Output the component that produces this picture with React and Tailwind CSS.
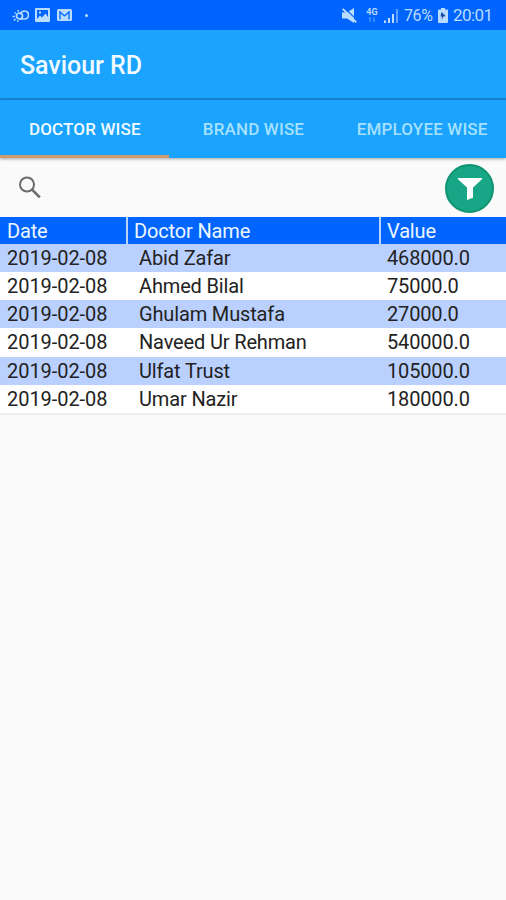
import React, { useState } from 'react';

const TABS = ['DOCTOR WISE', 'BRAND WISE', 'EMPLOYEE WISE'];

const ROWS = [
    { date: '2019-02-08', name: 'Abid Zafar', value: '468000.0' },
    { date: '2019-02-08', name: 'Ahmed Bilal', value: '75000.0' },
    { date: '2019-02-08', name: 'Ghulam Mustafa', value: '27000.0' },
    { date: '2019-02-08', name: 'Naveed Ur Rehman', value: '540000.0' },
    { date: '2019-02-08', name: 'Ulfat Trust', value: '105000.0' },
    { date: '2019-02-08', name: 'Umar Nazir', value: '180000.0' },
];

const StatusBar = () => (
    <div className="flex h-[30px] items-center justify-between bg-[#0065fe] pl-3 pr-[13px] text-[#b9dcff]">
        <div className="flex items-center">
            {/* Weather */}
            <svg width="17" height="14" viewBox="0 0 17 14" fill="none" stroke="currentColor" strokeWidth="1.700">
                <path d="M8 11h4.500a3.600 3.600 0 0 0 0-8c-2 0-3.500 1.500-4 3.500" />
                <circle cx="7.500" cy="8" r="3" />
                <path d="M.5 8.500h2.300M2.500 4.500l1.700 1M6 2l.5 1.700M1.800 12.500l1.800-1.400M5.500 13.700l.6-1.500" strokeWidth="1.400" />
            </svg>
            {/* Gallery */}
            <svg className="ml-1.5" width="15" height="14" viewBox="0 0 15 14">
                <path fill="currentColor" fillRule="evenodd" d="M1 0h13a1 1 0 0 1 1 1v12a1 1 0 0 1-1 1H1a1 1 0 0 1-1-1V1a1 1 0 0 1 1-1zM2 2v9l3-3.500 2 2 3.500-4L13 9V2zM4 3.500h2v2H4z" />
            </svg>
            {/* Mail */}
            <svg className="ml-[7px]" width="15" height="12" viewBox="0 0 15 12">
                <rect width="15" height="12" rx="1.500" fill="currentColor" />
                <path d="M3 10.500V3l4.500 4L12 3v7.500" fill="none" stroke="#0065fe" strokeWidth="1.300" />
            </svg>
            <span className="ml-[13px] h-[3px] w-[3px] rounded-full bg-current"></span>
        </div>
        <div className="flex items-center font-normal">
            {/* Muted */}
            <svg width="15" height="15" viewBox="0 0 15 15" fill="currentColor">
                <path d="M0 4.500h5L12 0v15L5 10.500H0z" />
                <path d="M2.500 0l13 12.500" stroke="#0065fe" strokeWidth="1.200" />
                <path d="M.7 .8l13.600 13.500" stroke="currentColor" strokeWidth="1.900" />
            </svg>
            <div className="ml-[9px] flex w-3 flex-col items-center">
                <span className="text-[9px] font-bold leading-[9px]">4G</span>
                <svg width="8" height="5" viewBox="0 0 8 5" fill="currentColor" opacity=".45">
                    <path d="M2 0l1.500 2h-1v3h-1V2h-1zM6 5L4.500 3h1V0h1v3h1z" />
                </svg>
            </div>
            <svg className="ml-1.5 mt-px" width="15" height="14" viewBox="0 0 15 14" fill="currentColor">
                <path d="M0 11.500h2V14H0zM4 9h2v5H4zM8 5h2v9H8z" />
                <path d="M12 0h2v14h-2z" opacity=".5" />
            </svg>
            <span className="ml-[5px] w-[30px] whitespace-nowrap pt-0.5 text-base tracking-[-0.4px]">76%</span>
            <svg className="ml-1" width="10" height="15" viewBox="0 0 10 15">
                <path fill="currentColor" d="M3 0h4v1.500h2a1 1 0 0 1 1 1V14a1 1 0 0 1-1 1H1a1 1 0 0 1-1-1V2.500a1 1 0 0 1 1-1h2z" />
                <path fill="#174f9e" d="M3.500 4l4.200 4-2.200.5L3.500 12l.5-3.500H2.500z" />
            </svg>
            <span className="ml-[5px] w-10 whitespace-nowrap pt-0.5 text-[17px] tracking-[-0.6px]">20:01</span>
        </div>
    </div>
);

const App = () => {
    const [active, setActive] = useState(0);

    return (
        <div className="h-[900px] w-[506px] overflow-hidden bg-[#fafafa] font-['Roboto',sans-serif]">
            <StatusBar />

            <header className="flex h-[70px] items-center border-b-2 border-[#1784da] bg-[#1aa3ff] pl-5">
                <h1 className="pt-1 text-[25px] font-medium tracking-[-0.05px] text-[#f1faff]">Saviour RD</h1>
            </header>

            <nav className="flex h-[58px] bg-[#1aa3ff] shadow-[0_1px_3px_rgba(0,0,0,0.35)]">
                {TABS.map((tab, i) => (
                    <button
                        key={tab}
                        onClick={() => setActive(i)}
                        className={`flex-1 whitespace-nowrap border-b-[3px] pl-px pt-1 text-[17px] font-medium tracking-[0.15px] ${
                            active === i ? 'border-[#cf9c6c] text-[#f1faff]' : 'border-transparent text-[#a5e1ff]'
                        }`}
                    >
                        {tab}
                    </button>
                ))}
            </nav>

            {/* Search and filter */}
            <div className="flex h-[59px] items-center justify-between pl-[18px] pr-3">
                <svg width="24" height="24" viewBox="0 0 24 24" fill="none" stroke="#6b6b6b" strokeWidth="2">
                    <circle cx="9" cy="8.500" r="7" />
                    <path d="M13.800 13.300l8 8" strokeWidth="2.600" />
                </svg>
                <button className="mt-0.5 flex h-[49px] w-[49px] items-center justify-center rounded-full border-2 border-[#109373] bg-[#18a786]">
                    <svg width="24" height="22" viewBox="0 0 24 22" fill="#fff">
                        <path d="M0 0h24v1.200L15 9.500v10.300L9 22V9.500L0 1.200z" />
                    </svg>
                </button>
            </div>

            <div className="text-xl leading-7 tracking-[-0.15px]">
                <div className="flex h-[27px] gap-[2px] bg-[#b9d2fb] text-[#eef6ff]">
                    <div className="w-[126px] bg-[#0065fe] pl-[7px]">Date</div>
                    <div className="w-[251px] bg-[#0065fe] pl-1.5">Doctor Name</div>
                    <div className="flex-1 bg-[#0065fe] pl-1.5">Value</div>
                </div>
                {ROWS.map((row, i) => (
                    <div
                        key={row.name}
                        className={`flex h-[28.15px] text-[#222] ${i % 2 === 0 ? 'bg-[#bad0ff]' : 'bg-white'}`}
                    >
                        <div className="w-[139px] pl-[7px] tracking-[-0.05px]">{row.date}</div>
                        <div className="w-[248px]">{row.name}</div>
                        <div>{row.value}</div>
                    </div>
                ))}
                <div className="h-[2px] bg-[#eeeeee]"></div>
            </div>
        </div>
    );
};

export default App;
